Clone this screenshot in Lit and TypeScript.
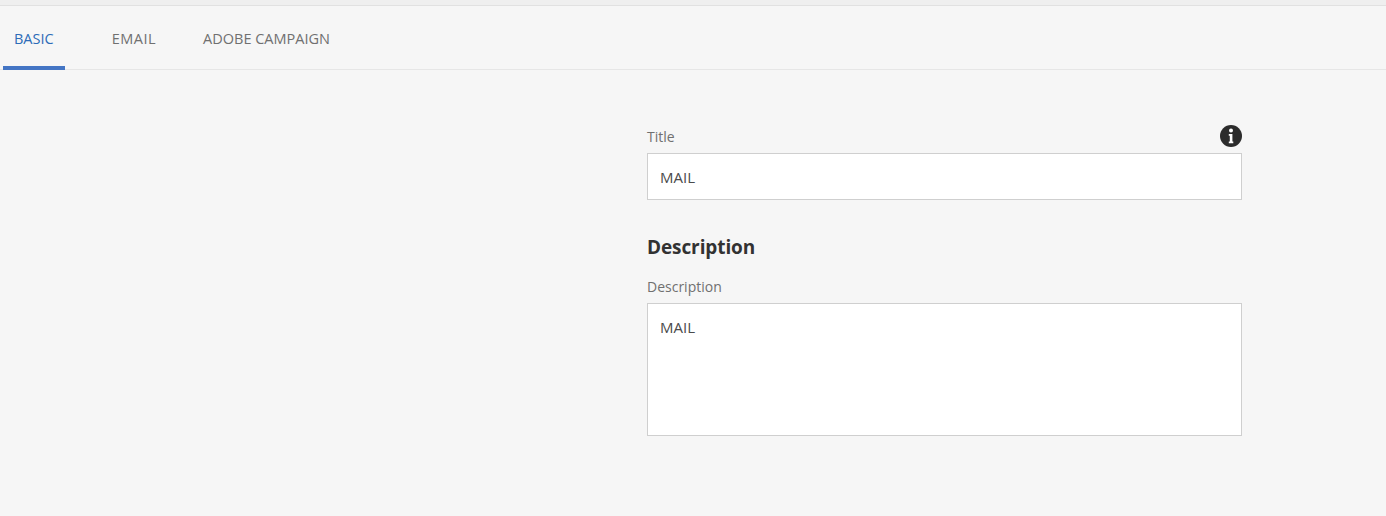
import { LitElement, html, css } from "lit";
import { customElement } from "lit/decorators.js";

@customElement("app-root")
export class AppRoot extends LitElement {
  static styles = css`
    :host {
      display: block;
      height: 516px;
      overflow: hidden;
      background: #f6f6f6;
      font-family: "Open Sans", "Noto Sans", sans-serif;
      color: #6e6e6e;
    }
    .topstrip {
      height: 5px;
      background: #efefef;
      border-bottom: 1px solid #e1e1e1;
    }
    .tabs {
      display: flex;
      height: 63px;
      padding-left: 3px;
      border-bottom: 1px solid #e6e6e6;
    }
    .tab {
      box-sizing: border-box;
      height: 64px;
      padding-top: 23px;
      margin-right: 47px;
      font-size: 14.5px;
      line-height: 19px;
      color: #707070;
    }
    .tab.wide {
      letter-spacing: 0.5px;
    }
    .tab.active {
      padding-left: 11px;
      padding-right: 11px;
      color: #2d6cb8;
      border-bottom: 4px solid #4475c4;
    }
    .form {
      width: 595px;
      margin: 56px 0 0 647px;
    }
    .label-row {
      display: flex;
      justify-content: space-between;
      align-items: center;
      height: 22px;
      margin-bottom: 5px;
    }
    .label-row svg {
      margin-top: -2px;
    }
    .label {
      font-size: 14px;
      line-height: 20px;
      color: #707070;
    }
    .field {
      box-sizing: border-box;
      background: #fff;
      border: 1px solid #cfcfcf;
      padding: 14px 12px 0;
      font-size: 15px;
      line-height: 19px;
      color: #4b4b4b;
    }
    .input { height: 47px; }
    .area { height: 133px; }
    h2 {
      margin: 34px 0 15px;
      font-size: 19px;
      line-height: 27px;
      font-weight: 700;
      letter-spacing: -0.1px;
      color: #323232;
    }
    svg { display: block; }
  `;

  render() {
    return html`
      <div class="topstrip"></div>
      <div class="tabs">
        <div class="tab active">BASIC</div>
        <div class="tab wide">EMAIL</div>
        <div class="tab">ADOBE CAMPAIGN</div>
      </div>
      <div class="form">
        <div class="label-row">
          <span class="label">Title</span>
          <svg width="22" height="22" viewBox="0 0 22 22">
            <circle cx="11" cy="11" r="11" fill="#2c2c2c"></circle>
            <circle cx="11" cy="5.6" r="2" fill="#fff"></circle>
            <path d="M8.8 9h3.6v7.4h.9v1.8H8.8v-1.8h1v-5.6h-1z" fill="#fff"></path>
          </svg>
        </div>
        <div class="field input">MAIL</div>
        <h2>Description</h2>
        <div class="label-row"><span class="label">Description</span></div>
        <div class="field area">MAIL</div>
      </div>
    `;
  }
}
